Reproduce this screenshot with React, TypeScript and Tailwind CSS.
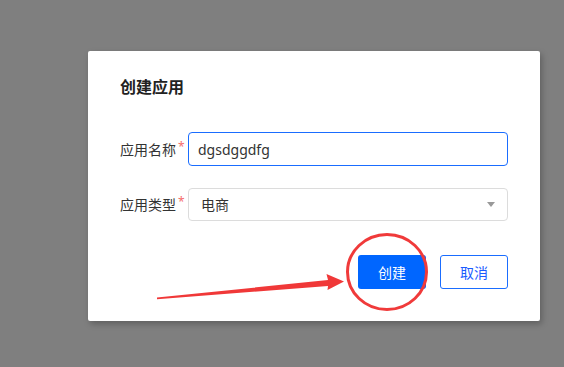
import { ChevronDown } from "lucide-react"

const font = { fontFamily: '"Noto Sans", "Noto Sans CJK SC", sans-serif' }

function Field({ label, children }: { label: string; children: React.ReactNode }) {
  return (
    <div className="flex items-center">
      <div className="w-[68px] shrink-0 text-[14px] text-[#333]">
        {label}
        <span className="relative -top-[4px] ml-[2px] text-[12px] text-[#f56c6c]">*</span>
      </div>
      {children}
    </div>
  )
}

export default function App() {
  return (
    <div className="relative h-[367px] w-[564px] overflow-hidden bg-[#7f7f7f]" style={font}>
      <div className="pl-[88px] pt-[51px]">
        <div className="w-[452px] rounded-[2px] bg-white px-[32px] pb-[32px] pt-[25px] shadow-[2px_3px_6px_rgba(0,0,0,0.25)]">
          <h2 className="text-[16px] font-bold leading-[22px] text-[#222]">创建应用</h2>

          <div className="mt-[34px] flex flex-col gap-[22px]">
            <Field label="应用名称">
              <div className="flex h-[34px] w-[320px] items-center rounded-[4px] border border-[#1a6dff] px-[9px] text-[14px] text-[#333]">
                dgsdggdfg
              </div>
            </Field>
            <Field label="应用类型">
              <div className="flex h-[33px] w-[320px] items-center justify-between rounded-[4px] border border-[#dcdcdc] pl-[12px] pr-[12px] text-[14px] text-[#333]">
                <span>电商</span>
                <span className="h-0 w-0 border-x-[4px] border-t-[5px] border-x-transparent border-t-[#999]" />
              </div>
            </Field>
          </div>

          <div className="mt-[34px] flex justify-end gap-[14px]">
            <button className="h-[34px] w-[68px] rounded-[3px] bg-[#0066ff] text-[14px] text-white">创建</button>
            <button className="h-[34px] w-[68px] rounded-[3px] border border-[#1a6dff] bg-white text-[14px] text-[#1a5cff]">取消</button>
          </div>
        </div>
      </div>

      <svg className="pointer-events-none absolute left-0 top-0" width="564" height="367" viewBox="0 0 564 367">
        <polygon points="157,297.6 328,280 326.5,274 344,281.5 327.5,290 328,286 157,299.2" fill="#f03838" />
        <ellipse cx="387" cy="272" rx="39.5" ry="37.5" fill="none" stroke="#f03a3a" strokeWidth="3" />
      </svg>
    </div>
  )
}
